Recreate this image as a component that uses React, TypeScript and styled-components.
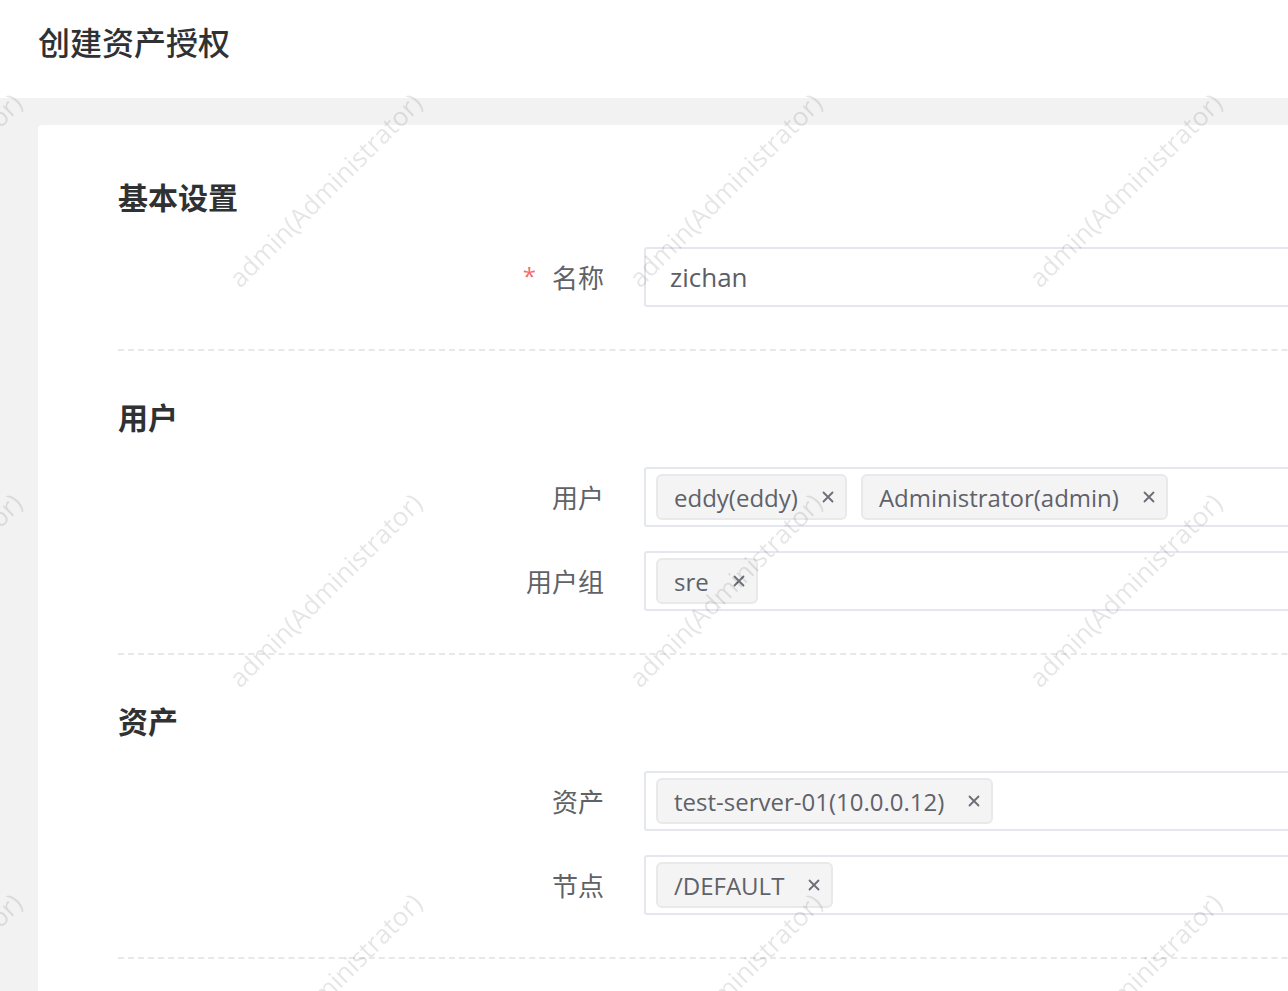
import React from "react";
import styled, { createGlobalStyle } from "styled-components";

const GlobalStyle = createGlobalStyle`
  html, body {
    margin: 0;
    padding: 0;
    overflow: hidden;
    background: #f2f2f3;
  }
  body {
    font-family: "Open Sans", "Noto Sans CJK SC", sans-serif;
    color: #303133;
  }
  * { box-sizing: border-box; }
`;

const Page = styled.div`
  width: 100%;
  min-height: 991px;
  display: flex;
  flex-direction: column;
`;

const Header = styled.header`
  height: 98px;
  background: #fff;
  padding: 20px 38px 0;
`;

const PageTitle = styled.h1`
  margin: 0;
  font-size: 32px;
  line-height: 46px;
  font-weight: 500;
  color: #303133;
`;

const Main = styled.main`
  flex: 1;
  padding: 27px 0 0 38px;
`;

const Card = styled.div`
  width: 1500px;
  background: #fff;
  border-radius: 4px 0 0 0;
  padding: 50px 80px 0;
  min-height: 900px;
`;

const Section = styled.section`
  padding-bottom: 42px;
  border-bottom: 2px dashed #e6e8ec;
  & + & {
    padding-top: 44px;
  }
`;

const SectionTitle = styled.h2`
  margin: 0 0 26px;
  font-size: 30px;
  line-height: 46px;
  font-weight: 700;
  color: #303133;
`;

const Rows = styled.div`
  display: flex;
  flex-direction: column;
  gap: 24px;
`;

const Row = styled.div`
  display: flex;
  align-items: center;
  height: 60px;
`;

const Label = styled.label<{ $required?: boolean }>`
  width: 526px;
  flex-shrink: 0;
  padding-right: 40px;
  text-align: right;
  font-size: 26px;
  color: #606266;
  &::before {
    content: ${(p) => (p.$required ? '"*"' : "none")};
    color: #f56c6c;
    margin-right: 16px;
    font-size: 24px;
    position: relative;
    top: -3px;
  }
`;

const InputBox = styled.div<{ $tags?: boolean }>`
  flex: 1;
  height: 60px;
  border: 2px solid #e4e7ed;
  border-radius: 3px;
  display: flex;
  align-items: center;
  gap: 14px;
  padding: 0 ${(p) => (p.$tags ? "10px" : "24px")};
  font-size: 26px;
  color: #5b5e66;
`;

const Tag = styled.span`
  display: inline-flex;
  align-items: center;
  gap: 24px;
  height: 46px;
  padding: 0 11px 0 16px;
  background: #f4f4f5;
  border: 2px solid #e9e9eb;
  border-radius: 6px;
  font-size: 24px;
  color: #5f6269;
  white-space: nowrap;
`;

const Close = styled.svg`
  width: 12px;
  height: 12px;
  flex-shrink: 0;
`;

const Watermarks = styled.div`
  position: fixed;
  inset: 0;
  overflow: hidden;
  pointer-events: none;
  z-index: 10;
`;

const WatermarkGrid = styled.div`
  position: absolute;
  left: -275px;
  top: -10px;
  display: grid;
  grid-template-columns: repeat(4, 400px);
  grid-auto-rows: 400px;
  place-items: center;
`;

const Mark = styled.span`
  font-family: "Open Sans", sans-serif;
  font-size: 26px;
  color: rgba(0, 0, 0, 0.1);
  white-space: nowrap;
  transform: rotate(-45deg);
`;

const TagItem: React.FC<{ text: string }> = ({ text }) => (
  <Tag>
    {text}
    <Close viewBox="0 0 12 12">
      <path d="M1.5 1.5 L10.5 10.5 M10.5 1.5 L1.5 10.5" stroke="#6b6e75" strokeWidth="1.8" strokeLinecap="round" />
    </Close>
  </Tag>
);

const sections = [
  {
    title: "基本设置",
    rows: [{ label: "名称", required: true, value: "zichan" }],
  },
  {
    title: "用户",
    rows: [
      { label: "用户", tags: ["eddy(eddy)", "Administrator(admin)"] },
      { label: "用户组", tags: ["sre"] },
    ],
  },
  {
    title: "资产",
    rows: [
      { label: "资产", tags: ["test-server-01(10.0.0.12)"] },
      { label: "节点", tags: ["/DEFAULT"] },
    ],
  },
];

const App: React.FC = () => {
  return (
    <>
      <GlobalStyle />
      <Page>
        <Header>
          <PageTitle>创建资产授权</PageTitle>
        </Header>
        <Main>
          <Card>
            {sections.map((s) => (
              <Section key={s.title}>
                <SectionTitle>{s.title}</SectionTitle>
                <Rows>
                  {s.rows.map((r: any) => (
                    <Row key={r.label}>
                      <Label $required={r.required}>{r.label}</Label>
                      {r.tags ? (
                        <InputBox $tags>
                          {r.tags.map((t: string) => (
                            <TagItem key={t} text={t} />
                          ))}
                        </InputBox>
                      ) : (
                        <InputBox>{r.value}</InputBox>
                      )}
                    </Row>
                  ))}
                </Rows>
              </Section>
            ))}
          </Card>
        </Main>
      </Page>
      <Watermarks>
        <WatermarkGrid>
          {Array.from({ length: 12 }).map((_, i) => (
            <Mark key={i}>admin(Administrator)</Mark>
          ))}
        </WatermarkGrid>
      </Watermarks>
    </>
  );
};

export default App;
